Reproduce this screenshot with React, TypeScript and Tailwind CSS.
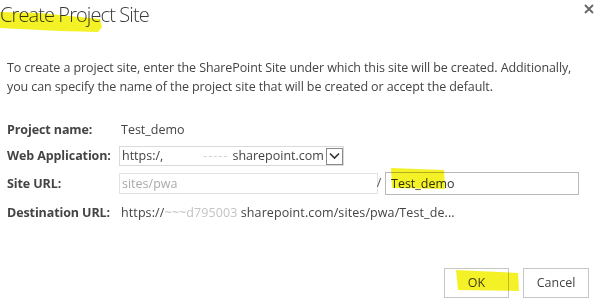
import React from "react";

export default function App() {
  return (
    <div
      className="relative w-[599px] h-[303px] overflow-hidden bg-white text-[#444444]"
      style={{ fontFamily: '"Open Sans", "Noto Sans", sans-serif' }}
    >
      <div className="flex flex-col h-full">
        <div className="flex items-start justify-between">
          <h1 className="pt-[2px] text-[20px] font-light leading-[26px] tracking-[-0.9px] text-[#3a3a3a]">
            Create Project Site
          </h1>
          <svg className="mr-[5px] mt-[4px]" width="10" height="10" viewBox="0 0 10 10">
            <path d="M1 1 L9 9 M9 1 L1 9" stroke="#666" strokeWidth="1.8" />
          </svg>
        </div>

        <p className="mt-[30px] pl-[7px] text-[12.5px] leading-[19px] tracking-[-0.1px]">
          To create a project site, enter the SharePoint Site under which this site will be created. Additionally,
          <br />
          you can specify the name of the project site that will be created or accept the default.
        </p>

        <div className="mt-[24px] grid grid-cols-[112px_1fr] items-center gap-y-[6px] pl-[7px] text-[12.5px]">
          <div className="font-bold leading-[20px] tracking-[-0.1px]">Project name:</div>
          <div className="pl-[2px] leading-[20px]">Test_demo</div>

          <div className="font-bold leading-[20px] tracking-[-0.1px]">Web Application:</div>
          <div className="flex h-[20px] w-[225px] items-center border border-[#dadada]">
            <span className="flex-1 whitespace-nowrap pl-[2px] leading-[18px]">
              https:/,
              <span className="inline-block w-[40px]" />
              <span className="text-[#cfcfcf] tracking-[1px]">-----</span>
              <span className="inline-block w-[4px]" />
              sharepoint.com
            </span>
            <span className="flex h-[17px] w-[17px] items-center justify-center border border-[#8a8a8a] bg-white">
              <svg width="11" height="8" viewBox="0 0 11 8">
                <path d="M1 1.5 L5.5 6 L10 1.5" fill="none" stroke="#333" strokeWidth="1.6" />
              </svg>
            </span>
          </div>

          <div className="font-bold leading-[20px] tracking-[-0.1px]">Site URL:</div>
          <div className="flex items-center">
            <div className="h-[21px] w-[259px] border border-[#e3e3e3] pl-[2px] leading-[19px] text-[#aaaaaa]">
              sites/pwa
            </div>
            <span className="ml-[-6px] w-[14px] text-center text-[#555]">/</span>
            <div className="ml-[-1px] h-[23px] w-[194px] border border-[#b8b8b8] pl-[5px] leading-[21px] text-[#333]">
              Test_demo
            </div>
          </div>

          <div className="mt-[2px] font-bold leading-[20px] tracking-[-0.1px]">Destination URL:</div>
          <div className="mt-[2px] whitespace-nowrap pl-[2px] leading-[20px] tracking-[0.1px]">
            https://
            <span className="text-[#c4c4c4]">~~~d795003</span> sharepoint.com/sites/pwa/Test_de...
          </div>
        </div>

        <div className="mt-auto mb-[5px] flex justify-end gap-[14px] pr-[10px]">
          <button className="h-[30px] w-[65px] border border-[#c6c6c6] bg-white text-[12.5px] text-[#444]">
            OK
          </button>
          <button className="h-[30px] w-[66px] border border-[#c6c6c6] bg-white text-[12.5px] text-[#444]">
            Cancel
          </button>
        </div>
      </div>

      {/* marker highlights over the content */}
      <svg
        className="pointer-events-none absolute left-0 top-0 mix-blend-multiply"
        width="599"
        height="303"
        viewBox="0 0 599 303"
      >
        <g fill="#f2ee00" opacity="0.85">
          <path d="M0 12 L40 13 L100 19 L102 27 L98 32 L60 31 L20 29 L0 28 Z" />
          <path d="M391 168 L444 170 L445 189 L392 188 Z" />
          <path d="M456 270 L518 273 L519 291 L458 290 Z" />
        </g>
      </svg>
    </div>
  );
}
